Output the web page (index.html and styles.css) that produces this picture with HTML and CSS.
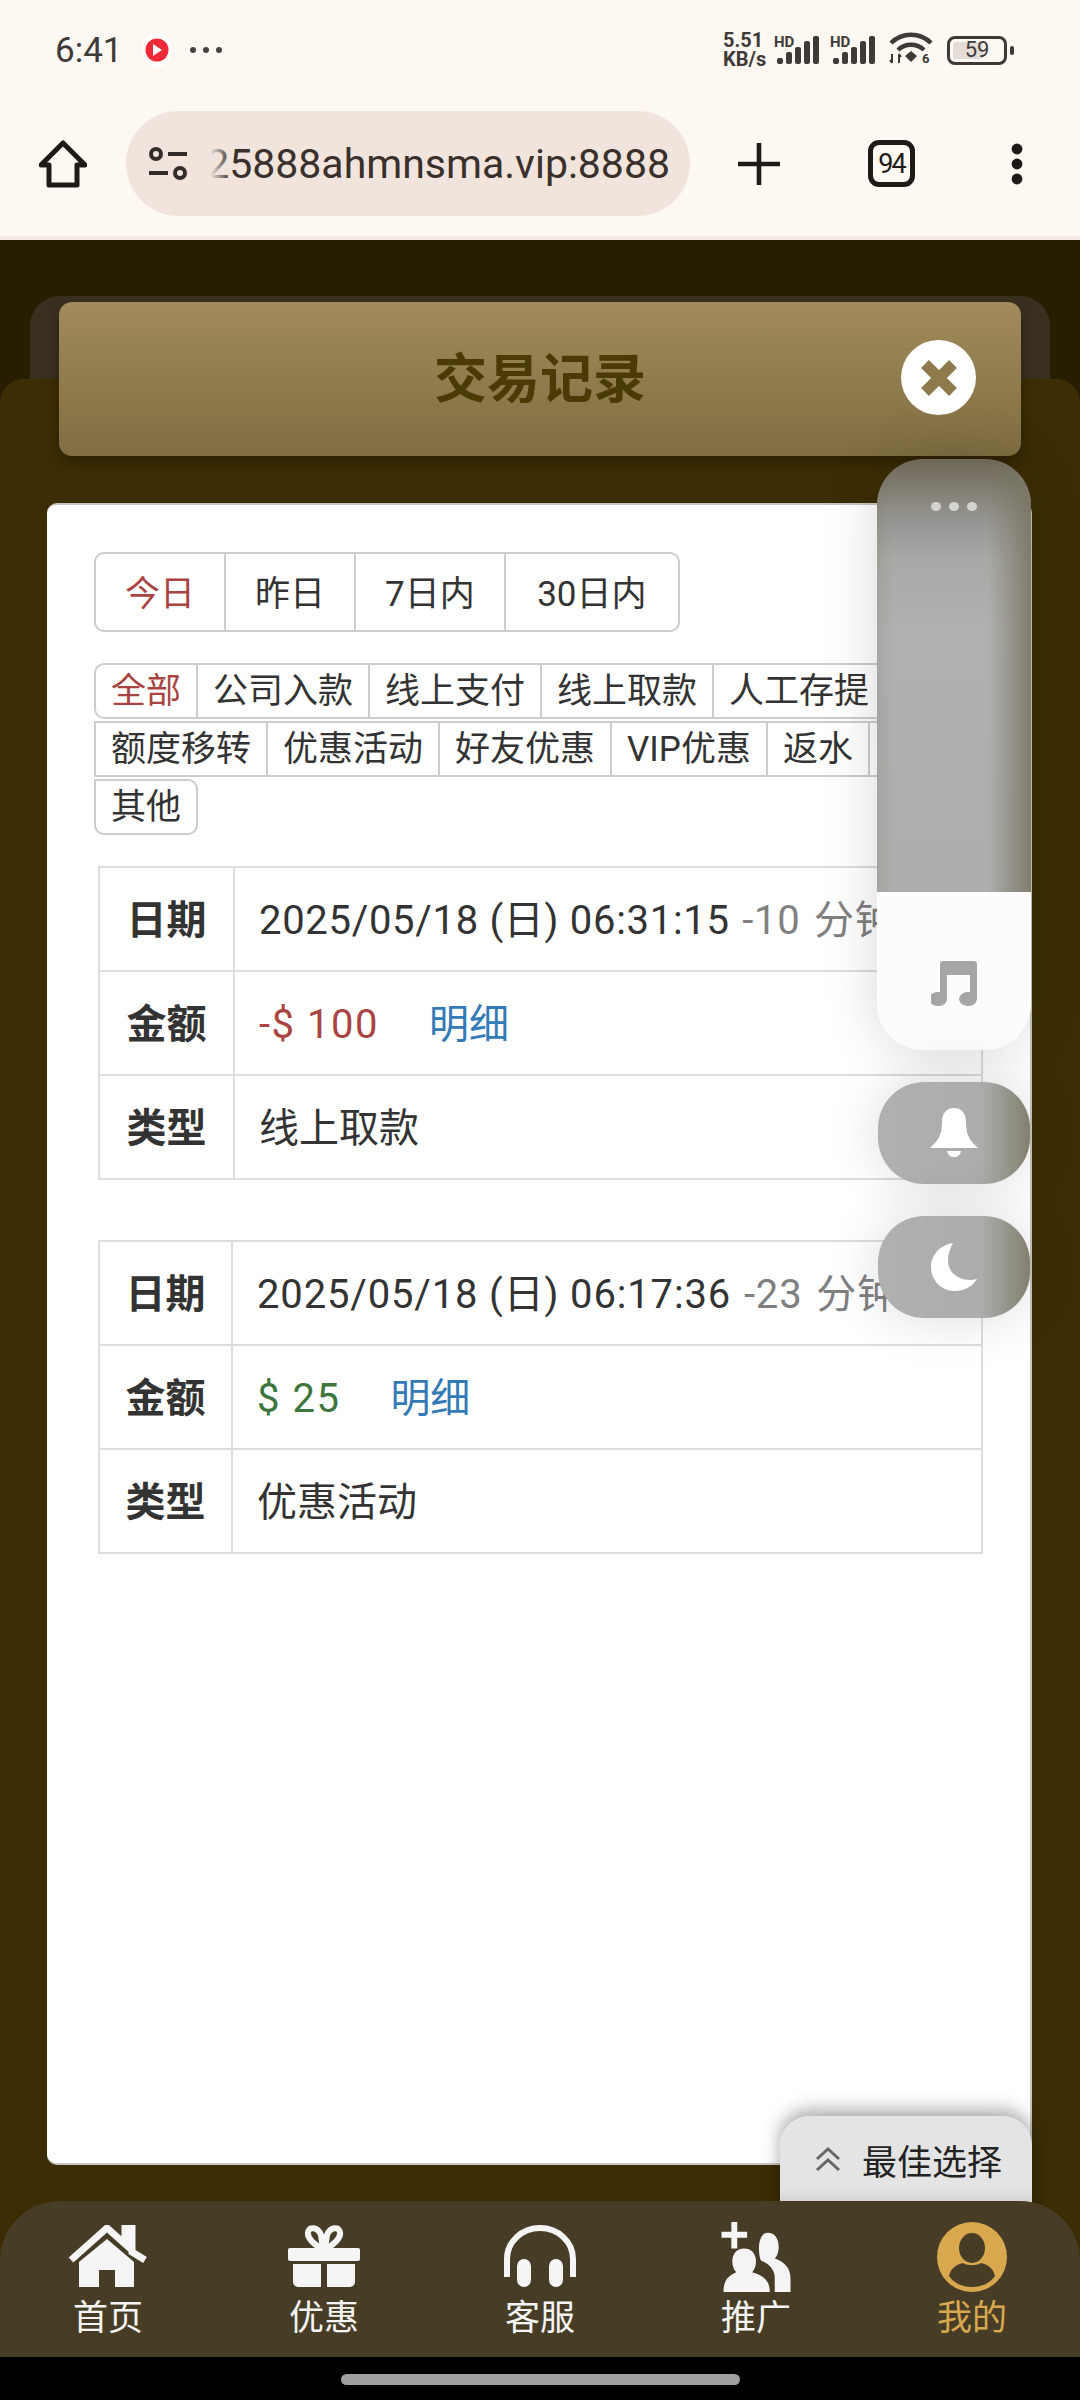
FILE: index.html
```html
<!DOCTYPE html>
<html lang="zh-CN">
<head>
<meta charset="utf-8">
<title>交易记录</title>
<link rel="stylesheet" href="styles.css">
</head>
<body>
<div class="screen">
  <header class="statusbar">
    <div class="status-left">
      <span class="clock">6:41</span>
      <svg class="status-app" viewBox="0 0 32 36"><ellipse cx="16" cy="18" rx="15" ry="17" fill="#fff"/><circle cx="16" cy="18" r="11.5" fill="#ee2a37"/><path d="M12 12l9 6-9 6z" fill="#fff"/></svg>
      <svg class="status-dots" viewBox="0 0 34 8"><circle cx="4" cy="4" r="3" fill="#444"/><circle cx="17" cy="4" r="3" fill="#444"/><circle cx="30" cy="4" r="3" fill="#444"/></svg>
    </div>
    <div class="status-right">
      <div class="speed"><span>5.51</span><span>KB/s</span></div>
      <svg class="signal" viewBox="0 0 46 32"><text x="0" y="13" class="hd">HD</text><g fill="#3f3a38"><rect x="3" y="24" width="6" height="6" rx="2"/><rect x="12" y="18" width="6" height="12" rx="2"/><rect x="21" y="13" width="6" height="17" rx="2"/><rect x="30" y="7" width="6" height="23" rx="2"/><rect x="39" y="2" width="6" height="28" rx="2"/></g></svg>
      <svg class="signal" viewBox="0 0 46 32"><text x="0" y="13" class="hd">HD</text><g fill="#3f3a38"><rect x="3" y="24" width="6" height="6" rx="2"/><rect x="12" y="18" width="6" height="12" rx="2"/><rect x="21" y="13" width="6" height="17" rx="2"/><rect x="30" y="7" width="6" height="23" rx="2"/><rect x="39" y="2" width="6" height="28" rx="2"/></g></svg>
      <svg class="wifi" viewBox="0 0 44 36"><g fill="none" stroke="#3f3a38" stroke-width="4.5"><path d="M2 11C13 0 31 0 42 11"/><path d="M9 18C16 11 28 11 35 18"/></g><path d="M22 19l6 5-6 6-6-6z" fill="#3f3a38"/><path d="M3 22v9M1 28l2 3M10 22v9M12 25l-2-3" stroke="#3f3a38" stroke-width="2" fill="none"/><text x="33" y="31" class="six">6</text></svg>
      <div class="battery"><span class="battery-fill"></span><span class="battery-num">59</span></div>
      <span class="battery-cap"></span>
    </div>
  </header>

  <nav class="toolbar">
    <svg class="tb-home" viewBox="0 0 48 48"><path d="M24 3L2 25h8v20h28V25h8z" fill="none" stroke="#1f1a17" stroke-width="5" stroke-linejoin="round"/></svg>
    <div class="urlbar">
      <svg class="tune" viewBox="0 0 40 34"><g fill="none" stroke="#332c28" stroke-width="4"><circle cx="8" cy="7" r="5"/><path d="M20 7h19M1 26h19"/><circle cx="32" cy="26" r="5"/></g></svg>
      <div class="url"><span>25888ahmnsma.vip:8888</span><i class="url-fade"></i></div>
    </div>
    <svg class="tb-plus" viewBox="0 0 42 42"><path d="M21 1v40M1 21h40" stroke="#1f1a17" stroke-width="4.6" stroke-linecap="round"/></svg>
    <div class="tabcount">94</div>
    <svg class="tb-more" viewBox="0 0 12 42"><circle cx="6" cy="6" r="5.4" fill="#1f1a17"/><circle cx="6" cy="21" r="5.4" fill="#1f1a17"/><circle cx="6" cy="36" r="5.4" fill="#1f1a17"/></svg>
  </nav>

  <main class="stage">
    <div class="sheet-tab"></div>
    <section class="sheet">
      <div class="titlebar">
        <h1 class="title">交易记录</h1>
        <button class="close"><svg viewBox="0 0 40 38"><path d="M6 5l28 28M34 5L6 33" stroke="#8e7a4d" stroke-width="11"/></svg></button>
      </div>
      <div class="card">
        <div class="tabs">
          <span class="tab is-active">今日</span><span class="tab">昨日</span><span class="tab">7日内</span><span class="tab">30日内</span>
        </div>
        <div class="filters">
          <span class="chip chip-first is-active">全部</span>
          <span class="chip">公司入款</span>
          <span class="chip">线上支付</span>
          <span class="chip">线上取款</span>
          <span class="chip">人工存提</span>
          <span class="chip chip-start">额度移转</span>
          <span class="chip">优惠活动</span>
          <span class="chip">好友优惠</span>
          <span class="chip">VIP优惠</span>
          <span class="chip">返水</span>
          <span class="chip chip-blank"></span>
          <span class="chip chip-last">其他</span>
        </div>
        <table class="record record-a">
          <tr><th>日期</th><td><span class="stamp">2025/05/18 (日) 06:31:15 <span class="ago">-10 分钟前</span></span></td></tr>
          <tr><th>金额</th><td><span class="money neg">-$ 100</span><a class="detail">明细</a></td></tr>
          <tr><th>类型</th><td>线上取款</td></tr>
        </table>
        <table class="record record-b">
          <tr><th>日期</th><td><span class="stamp">2025/05/18 (日) 06:17:36 <span class="ago">-23 分钟前</span></span></td></tr>
          <tr><th>金额</th><td><span class="money pos">$ 25</span><a class="detail">明细</a></td></tr>
          <tr><th>类型</th><td>优惠活动</td></tr>
        </table>
      </div>
    </section>

    <aside class="float-tools">
      <div class="tool-panel">
        <div class="panel-top"><span></span><span></span><span></span></div>
        <div class="panel-bottom">
          <svg class="music" viewBox="0 0 46 46"><path d="M9 3a3 3 0 0 1 3-3h31a3 3 0 0 1 3 3v35a9 7 0 1 1-7-6.8V14H16v24a9 7 0 1 1-7-6.8z" fill="#a5a5a5"/></svg>
        </div>
      </div>
      <button class="round-tool"><svg class="bell" viewBox="0 0 48 50"><path d="M24 0c8 0 12 6 12 14 0 12 3 18 12 26H0c9-8 12-14 12-26C12 6 16 0 24 0z" fill="#fff"/><path d="M17 43h14c-1 4-3 6-7 6s-6-2-7-6z" fill="#fff"/></svg></button>
      <button class="round-tool"><svg class="moon" viewBox="0 0 46 48"><path d="M22 0C9 2 0 12 0 24c0 14 11 24 24 24 9 0 17-4 22-12-15 4-29-5-29-18 0-7 2-13 5-18z" fill="#fff"/></svg></button>
    </aside>

    <button class="best">
      <svg class="best-arrows" viewBox="0 0 28 26"><path d="M3 13L14 3l11 10M3 24l11-10 11 10" fill="none" stroke="#666" stroke-width="3"/></svg>
      <span>最佳选择</span>
    </button>
  </main>

  <footer class="bottomnav">
    <a class="nav-item">
      <svg class="nav-icon" viewBox="0 0 80 62"><path d="M3 35L39 3l18 16V1h7v26l13 8" fill="none" stroke="#f5f5f5" stroke-width="7"/><path d="M39 14l27 23v25H47V45H31v17H11V37z" fill="#f5f5f5"/></svg>
      <span>首页</span>
    </a>
    <a class="nav-item">
      <svg class="nav-icon" viewBox="0 0 72 62"><g fill="none" stroke="#f5f5f5" stroke-width="6"><path d="M35 24C26 20 19 13 20 7s10-5 13 3zM37 24c9-4 16-11 15-17S42 2 39 10z"/></g><rect x="0" y="23" width="72" height="13" rx="2" fill="#f5f5f5"/><path d="M5 39h28v23H10a5 5 0 0 1-5-5zM39 39h28v18a5 5 0 0 1-5 5H39z" fill="#f5f5f5"/></svg>
      <span>优惠</span>
    </a>
    <a class="nav-item">
      <svg class="nav-icon" viewBox="0 0 72 62"><path d="M3 52V34a33 31 0 0 1 66 0v18" fill="none" stroke="#f5f5f5" stroke-width="6"/><rect x="13" y="34" width="14" height="28" rx="7" fill="#f5f5f5"/><rect x="45" y="34" width="14" height="28" rx="7" fill="#f5f5f5"/></svg>
      <span>客服</span>
    </a>
    <a class="nav-item">
      <svg class="nav-icon nav-icon-tall" viewBox="0 0 70 71"><path d="M10 0h6v10h10v6H16v11h-6V16H0v-6h10z" fill="#f5f5f5"/><path d="M47 11c7 0 11 6 11 14 0 6-2 10-4 12 9 3 16 9 16 20v14H54V56c0-8-6-14-14-17-1-2-2-6-2-12 0-9 3-16 9-16z" fill="#f5f5f5"/><path d="M23 27c8 0 12 6 12 13 0 5-2 9-4 11 9 3 18 6 18 20H2C2 57 9 54 15 51c-2-2-4-6-4-11 0-7 4-13 12-13z" fill="#f5f5f5"/></svg>
      <span>推广</span>
    </a>
    <a class="nav-item is-current">
      <svg class="nav-icon nav-icon-tall" viewBox="0 0 70 70"><circle cx="35" cy="35" r="35" fill="#d9a84e"/><ellipse cx="35" cy="26" rx="13" ry="15" fill="#473d27"/><path d="M12 54c2-9 9-12 14-13 5 3 13 3 18 0 5 1 12 4 14 13-5 7-13 11-23 11s-18-4-23-11z" fill="#473d27"/></svg>
      <span>我的</span>
    </a>
  </footer>
  <div class="homebar"><span></span></div>
</div>
</body>
</html>
```

FILE: styles.css
```css
* { box-sizing: border-box; }
html, body { margin: 0; padding: 0; }
body { width: 1080px; height: 2400px; overflow: hidden; font-family: Roboto, "Noto Sans CJK SC", sans-serif; color: #333; }
.screen { width: 1080px; height: 2400px; display: flex; flex-direction: column; background: #000; overflow: hidden; }

/* status bar */
.statusbar { height: 100px; flex: none; background: #fdf8f2; display: flex; justify-content: space-between; align-items: center; padding: 0 66px 0 55px; }
.status-left { display: flex; align-items: center; }
.clock { font-size: 35px; color: #3f3a38; width: 86px; }
.status-app { width: 32px; height: 36px; }
.status-dots { width: 34px; height: 8px; margin-left: 16px; }
.status-right { display: flex; align-items: center; }
.speed { display: flex; flex-direction: column; font-size: 20px; line-height: 19px; font-weight: 700; color: #3f3a38; width: 48px; white-space: nowrap; }
.signal { width: 46px; height: 32px; margin-left: 3px; margin-right: 7px; }
.hd { font: 700 15px Roboto, sans-serif; fill: #3f3a38; }
.six { font: 700 13px Roboto, sans-serif; fill: #3f3a38; }
.wifi { width: 44px; height: 36px; margin-left: 6px; }
.battery { position: relative; width: 60px; height: 29px; margin-left: 14px; border: 3px solid #3f3a38; border-radius: 8px; display: flex; align-items: center; justify-content: center; }
.battery-fill { position: absolute; left: 3px; top: 3px; bottom: 3px; width: 30px; background: #e4dcd7; border-radius: 2px; }
.battery-num { position: relative; font-size: 22px; color: #3f3a38; line-height: 1; }
.battery-cap { width: 4px; height: 9px; margin-left: 3px; background: #3f3a38; border-radius: 2px; }

/* browser toolbar */
.toolbar { height: 140px; flex: none; background: #fdf8f2; border-bottom: 4px solid #f3ebe3; padding: 0 0 9px 39px; display: flex; align-items: center; }
.tb-home { width: 48px; height: 48px; flex: none; }
.urlbar { width: 564px; height: 105px; margin-left: 39px; flex: none; border-radius: 53px; background: #f0e4dc; display: flex; align-items: center; padding: 0 20px 0 22px; }
.tune { width: 40px; height: 34px; flex: none; }
.url { position: relative; flex: 1; margin-left: 19px; overflow: hidden; display: flex; justify-content: flex-end; font-size: 41px; line-height: 56px; color: #3a302b; white-space: nowrap; }
.url-fade { position: absolute; left: 0; top: 0; bottom: 0; width: 24px; background: linear-gradient(to right, #f0e4dc 15%, rgba(240, 228, 220, 0)); }
.tb-plus { width: 42px; height: 42px; margin-left: 48px; flex: none; }
.tabcount { width: 47px; height: 47px; margin-left: 88px; flex: none; border: 5px solid #1f1a17; border-radius: 11px; display: flex; align-items: center; justify-content: center; font-size: 27px; letter-spacing: -2px; color: #1f1a17; }
.tb-more { width: 12px; height: 42px; margin-left: 96px; flex: none; }

/* page */
.stage { position: relative; flex: 1; min-height: 0; background: #271e00; padding-top: 139px; }
.sheet-tab { position: absolute; left: 30px; top: 56px; width: 1020px; height: 120px; border-radius: 30px 30px 0 0; background: #3a3020; }
.sheet { position: relative; display: flow-root; height: 100%; background: #3c2d04; border-radius: 24px 24px 0 0; padding: 0 48px 0 47px; }
.titlebar { position: relative; height: 154px; margin: -77px 11px 0 12px; border-radius: 13px; background: linear-gradient(to bottom, #a18b5a, #806d42); box-shadow: 0 6px 14px rgba(0, 0, 0, .3); display: flex; align-items: center; justify-content: center; padding-top: 2px; }
.title { margin: 0; font-size: 53px; font-weight: 700; line-height: 1; color: #4a3a06; }
.close { position: absolute; left: 842px; top: 38px; width: 75px; height: 75px; padding: 0; border: 0; border-radius: 50%; background: #fff; display: flex; align-items: center; justify-content: center; }
.close svg { width: 40px; height: 38px; }

.card { height: 1662px; margin-top: 47px; padding: 47px 47px 0 47px; background: #fff; border-radius: 10px; border-top: 2px solid #c9c6bd; border-bottom: 2px solid #c9c6bd; border-right: 2px solid #c9c6bd; overflow: hidden; }
.tabs { display: inline-flex; height: 80px; border: 2px solid #ccc; border-radius: 10px; vertical-align: top; }
.tab { display: flex; align-items: center; padding: 0 29px 4px; font-size: 35px; color: #333; border-right: 2px solid #ccc; }
.tab:last-child { border-right: 0; padding: 0 31.5px 4px; }
.is-active { color: #a94442; }

.filters { display: flex; flex-wrap: wrap; width: 893px; margin-top: 31px; row-gap: 2px; }
.chip { display: flex; align-items: center; height: 56px; padding: 1px 15px 0; margin-right: -2px; font-size: 35px; line-height: 1; color: #333; border: 2px solid #ccc; white-space: nowrap; background: #fff; }
.chip.is-active { color: #a94442; }
.chip-first { border-radius: 10px 0 0 10px; }
.chip-blank { width: 104px; }
.chip-last { border-radius: 0 10px 10px 10px; }

.record { border-collapse: collapse; width: 885px; margin-left: 4px; table-layout: fixed; font-size: 40px; color: #333; }
.record th, .record td { height: 104px; border: 2px solid #ddd; padding: 0 0 4px; white-space: nowrap; overflow: hidden; }
.record th { font-weight: 700; font-size: 40px; text-align: center; }
.record td { padding: 0 0 5px 24px; }
.record-a { margin-top: 31px; }
.record-a th { width: 135px; }
.record-b { margin-top: 60px; }
.record-b th { width: 133px; }
.stamp { letter-spacing: .7px; }
.record-b .stamp { letter-spacing: .85px; }
.ago { color: #808080; margin-left: 2px; word-spacing: 3px; }
.money { letter-spacing: 1.5px; }
.neg { color: #a94442; }
.pos { color: #3c763d; }
.detail { color: #337ab7; margin-left: 50px; }

/* floating tools */
.float-tools { position: absolute; left: 877px; top: 219px; width: 154px; display: flex; flex-direction: column; align-items: center; gap: 32px; }
.tool-panel { width: 154px; height: 591px; border-radius: 46px; overflow: hidden; display: flex; flex-direction: column; box-shadow: 0 0 55px rgba(0, 0, 0, .16); }
.panel-top { height: 433px; flex: none; display: flex; justify-content: center; gap: 8px; padding-top: 43px; background: linear-gradient(to right, rgba(120, 116, 98, .18) 0, rgba(120, 116, 98, 0) 10%, rgba(120, 116, 98, 0) 72%, rgba(120, 116, 98, .85) 100%), linear-gradient(to bottom, #6c6656 0, #7f7c70 28px, #959390 58px, #a8a8a6 100px, #b0b0b0 170px, #adadad 433px); }
.panel-top span { width: 10px; height: 9px; border-radius: 50%; background: #d5d3cf; }
.panel-bottom { flex: 1; background: #fcfcfc; display: flex; justify-content: center; padding-top: 69px; }
.music { width: 46px; height: 46px; }
.round-tool { width: 152px; height: 102px; padding: 0; border: 0; border-radius: 46px; background: linear-gradient(to right, #b0b0b0 0, #acacac 68%, #82806f 100%); box-shadow: 0 0 55px rgba(0, 0, 0, .14); display: flex; align-items: center; justify-content: center; }
.bell { width: 48px; height: 50px; }
.moon { width: 46px; height: 48px; }

.best { position: absolute; left: 780px; top: 1876px; width: 252px; height: 110px; padding: 0 0 24px 34px; border: 0; border-radius: 30px 30px 0 0; background: linear-gradient(to bottom, #e4e4e4 0, #e4e4e4 72px, #cfcfcf 90px); box-shadow: 0 -6px 18px rgba(0, 0, 0, .35); display: flex; align-items: center; font-family: inherit; font-size: 35px; color: #222; }
.best-arrows { width: 28px; height: 26px; flex: none; margin-right: 20px; }

/* bottom nav */
.bottomnav { position: relative; z-index: 2; height: 156px; flex: none; margin-top: -60px; background: #473d27; border-radius: 60px 60px 0 0; display: flex; }
.nav-item { flex: 1; display: flex; flex-direction: column; align-items: center; padding-top: 24px; color: #f5f5f5; font-size: 35px; line-height: 40px; }
.nav-icon { width: 80px; height: 62px; margin-bottom: 12px; }
.nav-icon-tall { width: 70px; height: 70px; margin-top: -3px; margin-bottom: 7px; }
.is-current { color: #d9a84e; }
.homebar { height: 43px; flex: none; background: #000; display: flex; justify-content: center; padding-top: 17px; }
.homebar span { width: 399px; height: 11px; border-radius: 6px; background: #a0a0a0; }
```
